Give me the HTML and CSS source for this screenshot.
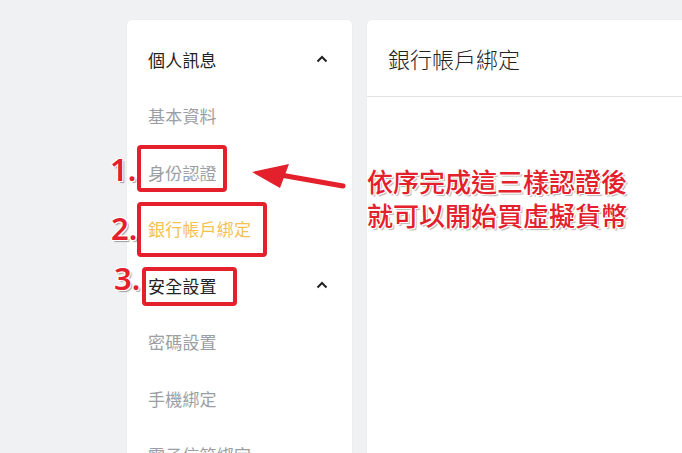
FILE: index.html
```html
<!DOCTYPE html>
<html lang="zh-Hant">
<head>
<meta charset="utf-8">
<link rel="stylesheet" href="styles.css">
</head>
<body>
<div class="page">
  <aside class="side">
    <div class="group">
      <span>個人訊息</span>
      <svg class="chev" width="12" height="8" viewBox="0 0 12 8"><polyline points="1.5,6.5 6,2 10.5,6.5" fill="none" stroke="#222" stroke-width="2"/></svg>
    </div>
    <div class="item">基本資料</div>
    <div class="item">身份認證</div>
    <div class="item active">銀行帳戶綁定</div>
    <div class="group">
      <span>安全設置</span>
      <svg class="chev" width="12" height="8" viewBox="0 0 12 8"><polyline points="1.5,6.5 6,2 10.5,6.5" fill="none" stroke="#222" stroke-width="2"/></svg>
    </div>
    <div class="item">密碼設置</div>
    <div class="item">手機綁定</div>
    <div class="item">電子信箱綁定</div>
  </aside>
  <main class="main">
    <div class="main-head">銀行帳戶綁定</div>
  </main>
</div>

<div class="mark box1"></div>
<div class="mark box2"></div>
<div class="mark box3"></div>
<div class="num n1">1.</div>
<div class="num n2">2.</div>
<div class="num n3">3.</div>
<svg class="arrow" width="110" height="40" viewBox="0 0 110 40">
  <line x1="96" y1="31" x2="28" y2="19" stroke="#e3202b" stroke-width="5" stroke-linecap="round"/>
  <polygon points="5,17 42,9 33,33" fill="#e3202b"/>
</svg>
<div class="note">依序完成這三樣認證後<br>就可以開始買虛擬貨幣</div>
</body>
</html>
```
FILE: styles.css
```css
html, body {
  margin: 0;
  padding: 0;
  background: #f0f1f3;
  overflow: hidden;
  width: 682px;
  height: 453px;
  font-family: "Noto Sans CJK TC", "Noto Sans", sans-serif;
}
.page {
  display: flex;
  gap: 15px;
  padding: 20px 0 0 127px;
}
.side {
  width: 225px;
  height: 520px;
  flex: none;
  background: #fff;
  border-radius: 5px;
  box-shadow: 0 0 2px rgba(0,0,0,0.06);
  padding: 11px 0 0 0;
  box-sizing: border-box;
}
.group, .item {
  height: 56.5px;
  display: flex;
  align-items: center;
  padding: 0 24px 0 21px;
  font-size: 17px;
  letter-spacing: 0.2px;
}
.group {
  justify-content: space-between;
  color: #222;
  font-weight: 400;
}
.item {
  color: #9b9ea4;
  font-weight: 400;
}
.item.active { color: #f5c153; }
.main {
  width: 340px;
  flex: none;
  height: 520px;
  background: #fff;
  border-radius: 5px;
  box-shadow: 0 0 2px rgba(0,0,0,0.06);
}
.main-head {
  height: 77px;
  border-bottom: 1px solid #e2e3e5;
  display: flex;
  align-items: center;
  padding-left: 21px;
  font-size: 22px;
  font-weight: 300;
  color: #222;
  box-sizing: border-box;
}
.mark {
  position: absolute;
  border: 4px solid #e3202b;
  border-radius: 4px;
  box-sizing: border-box;
}
.box1 { left: 137px; top: 145px; width: 90px; height: 47px; }
.box2 { left: 137px; top: 202px; width: 130px; height: 55px; }
.box3 { left: 142px; top: 267px; width: 95px; height: 39px; }
.num {
  position: absolute;
  font-family: "Noto Sans", sans-serif;
  font-weight: 600;
  font-size: 31px;
  line-height: 1;
  color: #e3202b;
  text-shadow: -1px -1px 0 #fff, 1px -1px 0 #fff, -1px 1px 0 #fff, 1px 1px 0 #fff, 2px 2px 1px rgba(0,0,0,0.35);
}
.n1 { left: 110px; top: 154px; }
.n2 { left: 111px; top: 213px; }
.n3 { left: 114px; top: 263px; }
.arrow {
  position: absolute;
  left: 247px;
  top: 155px;
}
.note {
  position: absolute;
  left: 367px;
  top: 164px;
  font-size: 26px;
  line-height: 34px;
  font-weight: 500;
  color: #e3202b;
  text-shadow: -1px -1px 0 #fff, 1px -1px 0 #fff, -1px 1px 0 #fff, 1px 1px 0 #fff, 2px 2px 1px rgba(0,0,0,0.3);
}
```
